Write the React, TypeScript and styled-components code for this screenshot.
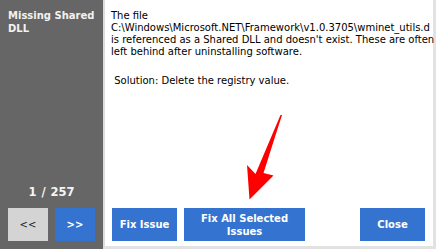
import React from "react";
import styled, { createGlobalStyle } from "styled-components";

const Global = createGlobalStyle`
  html, body { margin: 0; padding: 0; background: #ffffff; }
  body { width: 436px; height: 249px; overflow: hidden; }
`;

const Window = styled.div`
  position: relative;
  width: 436px;
  height: 249px;
  display: flex;
  box-sizing: border-box;
  font-family: "DejaVu Sans", Verdana, sans-serif;
`;

const SidePanel = styled.div`
  width: 103px;
  flex: none;
  background: #666666;
  box-sizing: border-box;
  padding: 9px 8px 8px 8px;
  display: flex;
  flex-direction: column;
`;

const Title = styled.div`
  color: #f2f2f2;
  font-weight: bold;
  font-size: 10px;
  line-height: 13px;
  flex: 1;
`;

const Counter = styled.div`
  color: #f5f5f5;
  font-weight: bold;
  font-size: 11.5px;
  line-height: 13px;
  text-align: center;
  word-spacing: 1px;
  margin-bottom: 9px;
`;

const NavRow = styled.div`
  display: flex;
  gap: 7px;
`;

const NavButton = styled.button<{ $light?: boolean }>`
  width: 41px;
  height: 33px;
  border: none;
  margin: 0;
  padding: 0;
  background: ${(p) => (p.$light ? "#d4d4d4" : "#3473d0")};
  color: ${(p) => (p.$light ? "#222222" : "#ffffff")};
  font-family: "DejaVu Sans", Verdana, sans-serif;
  font-size: 10px;
  font-weight: ${(p) => (p.$light ? "normal" : "bold")};
  display: flex;
  align-items: center;
  justify-content: center;
`;

const Content = styled.div`
  flex: 1;
  min-width: 0;
  box-sizing: border-box;
  border-left: 2px solid #dcdcdc;
  border-right: 3px solid #e2e2e2;
  border-bottom: 3px solid #e2e2e2;
  padding: 10px 0 5px 6px;
  display: flex;
  flex-direction: column;
`;

const Message = styled.div`
  flex: 1;
  color: #000000;
  font-family: "DejaVu Sans", Verdana, sans-serif;
  font-size: 10px;
  line-height: 12px;
`;

const Line = styled.div`
  white-space: pre;
`;

const Solution = styled(Line)`
  margin-top: 17px;
`;

const ActionRow = styled.div`
  display: flex;
  gap: 7px;
  padding: 0 8px 0 1px;
`;

const ActionButton = styled.button<{ $w: number; $push?: boolean }>`
  width: ${(p) => p.$w}px;
  height: 33px;
  border: none;
  margin: 0;
  margin-left: ${(p) => (p.$push ? "auto" : "0")};
  padding: 0;
  background: #3473d0;
  color: #ffffff;
  font-family: "DejaVu Sans", Verdana, sans-serif;
  font-size: 10px;
  font-weight: bold;
  line-height: 13px;
  text-align: center;
`;

const Arrow = styled.svg`
  position: absolute;
  left: 0;
  top: 0;
  pointer-events: none;
`;

export default function App() {
  return (
    <>
      <Global />
      <Window>
        <SidePanel>
          <Title>
            Missing Shared
            <br />
            DLL
          </Title>
          <Counter>1 / 257</Counter>
          <NavRow>
            <NavButton $light>&lt;&lt;</NavButton>
            <NavButton>&gt;&gt;</NavButton>
          </NavRow>
        </SidePanel>
        <Content>
          <Message>
            <Line>The file</Line>
            <Line>C:\Windows\Microsoft.NET\Framework\v1.0.3705\wminet_utils.d</Line>
            <Line>is referenced as a Shared DLL and doesn't exist. These are often</Line>
            <Line>left behind after uninstalling software.</Line>
            <Solution> Solution: Delete the registry value.</Solution>
          </Message>
          <ActionRow>
            <ActionButton $w={65}>Fix Issue</ActionButton>
            <ActionButton $w={121}>
              Fix All Selected
              <br />
              Issues
            </ActionButton>
            <ActionButton $w={65} $push>
              Close
            </ActionButton>
          </ActionRow>
        </Content>
        <Arrow width="436" height="249" viewBox="0 0 436 249">
          <polygon
            points="282,115 263.5,173 273.5,175.5 249.5,199.5 247,165 255.5,174 280.5,115"
            fill="#ff0000"
          />
        </Arrow>
      </Window>
    </>
  );
}
